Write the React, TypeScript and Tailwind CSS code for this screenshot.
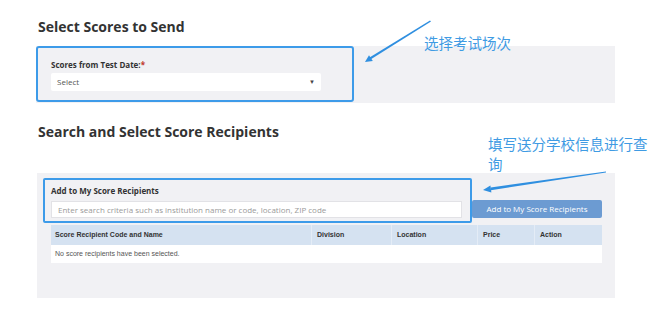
import React from 'react'

const cols = ['Score Recipient Code and Name', 'Division', 'Location', 'Price', 'Action']

const App = () => {
  return (
    <div className="relative w-[660px] h-[319px] bg-white overflow-hidden font-['Open_Sans',sans-serif] text-[#333]">
      <h2 className="pl-[38px] pt-[16px] text-[14px] leading-[22px] font-bold">Select Scores to Send</h2>

      <div className="ml-[36px] mt-[8px] w-[579px] h-[57px] bg-[#f1f1f4]">
        <div className="w-[318px] h-[56px] border-2 border-[#3d9be9] rounded-[3px] pl-[13px] pt-[11px]">
          <div className="text-[8px] leading-[12px] font-bold text-[#333]">
            Scores from Test Date:<span className="text-[#c0392b]">*</span>
          </div>
          <div className="mt-[2px] w-[270px] h-[18px] bg-white rounded-[2px] flex items-center justify-between pl-[6px] pr-[6px] text-[8px] text-[#555]">
            <span>Select</span>
            <span className="text-[6px] text-[#444]">▼</span>
          </div>
        </div>
      </div>

      <h2 className="pl-[38px] mt-[18px] text-[14px] leading-[22px] font-bold">Search and Select Score Recipients</h2>

      <div className="ml-[37px] mt-[30px] w-[578px] h-[125px] bg-[#f1f1f4] pt-[5px]">
        <div className="flex items-start ml-[6px]">
          <div className="w-[429px] h-[45px] border-2 border-[#3d9be9] rounded-[2px] pl-[6px] pt-[5px]">
            <div className="text-[8px] leading-[12px] font-bold text-[#333]">Add to My Score Recipients</div>
            <div className="mt-[4px] w-[411px] h-[17px] bg-white border border-[#e2e2e6] flex items-center pl-[6px] text-[8px] text-[#9a9a9a]">
              Enter search criteria such as institution name or code, location, ZIP code
            </div>
          </div>
          <div className="mt-[22px] w-[130px] h-[18px] bg-[#6c9bd2] rounded-[2px] flex items-center justify-center text-[8px] text-white">
            Add to My Score Recipients
          </div>
        </div>

        <div className="ml-[14px] mt-[2px] w-[551px] font-['Liberation_Sans',Arial,sans-serif] text-[7px]">
          <div className="grid grid-cols-[260px_80px_86px_57px_68px] h-[20px] bg-[#d5e2f1]">
            {cols.map((c, i) => (
              <div
                key={c}
                className={`flex items-center font-bold text-[#333] ${i === 0 ? 'pl-[4px]' : 'pl-[5px] border-l border-[#e4ecf6]'}`}
              >
                {c}
              </div>
            ))}
          </div>
          <div className="h-[18px] bg-white flex items-center pl-[4px] text-[#555]">
            No score recipients have been selected.
          </div>
        </div>
      </div>

      {/* annotations */}
      <div className="absolute left-[424px] top-[33px] text-[14.5px] leading-[20px] text-[#3f9be3] font-['Noto_Sans_CJK_SC',sans-serif]">
        选择考试场次
      </div>
      <div className="absolute left-[488px] top-[134px] text-[14.5px] leading-[20px] text-[#3f9be3] font-['Noto_Sans_CJK_SC',sans-serif]">
        填写送分学校信息进行查
        <br />
        询
      </div>

      <svg className="absolute left-0 top-0 pointer-events-none" width="660" height="319">
        <path d="M430 20.5 L431 21.5 L370.5 59.5 L369.5 57.5 Z" fill="#2f8fe0" />
        <path d="M365 62 L372.8 60.9 L369 55.3 Z" fill="#2f8fe0" />
        <path d="M606 171.5 L606 172.5 L490.8 190.2 L490.6 187.4 Z" fill="#2f8fe0" />
        <path d="M483 190 L491.4 192.4 L490.4 185.4 Z" fill="#2f8fe0" />
      </svg>
    </div>
  )
}

export default App
